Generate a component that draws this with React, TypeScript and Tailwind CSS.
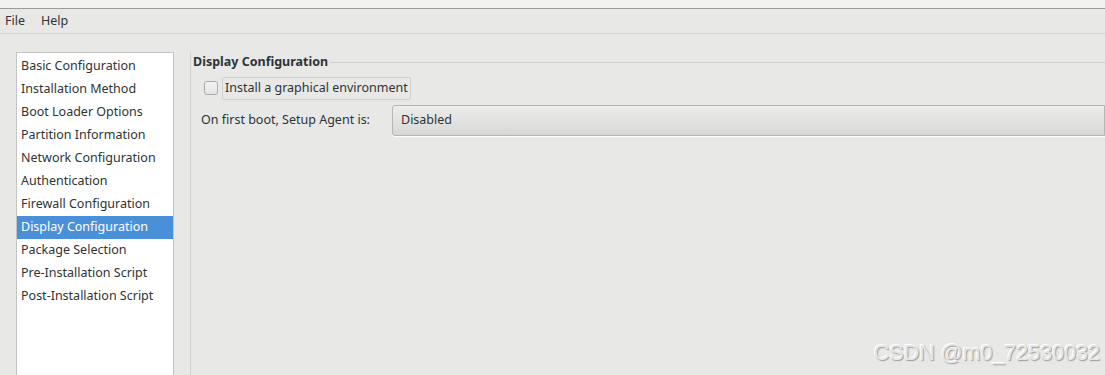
import React from "react";

const SECTIONS = [
  "Basic Configuration",
  "Installation Method",
  "Boot Loader Options",
  "Partition Information",
  "Network Configuration",
  "Authentication",
  "Firewall Configuration",
  "Display Configuration",
  "Package Selection",
  "Pre-Installation Script",
  "Post-Installation Script",
];

const ACTIVE = "Display Configuration";

export default function App() {
  return (
    <div className="relative h-[375px] w-[1105px] overflow-hidden bg-[#e8e8e7] font-['Noto_Sans',sans-serif] text-[12.5px] text-[#2e3436]">
      {/* 창 제목줄 잔여 */}
      <div className="h-[9px] border-b border-[#9b9b97] bg-[#f2f2f1]" />

      {/* 메뉴바 */}
      <div className="flex h-[25px] items-center gap-[16px] border-b border-[#d6d6d4] px-[5px]">
        <span>File</span>
        <span>Help</span>
      </div>

      <div className="flex pt-[18px]">
        {/* 섹션 목록 */}
        <div className="ml-[16px] h-[330px] w-[158px] border border-[#c4c4c2] bg-white pt-[2px]">
          {SECTIONS.map((s) => (
            <div
              key={s}
              className={`flex h-[23px] items-center px-[4px] ${
                s === ACTIVE ? "bg-[#4a90d9] text-white" : ""
              }`}
            >
              {s}
            </div>
          ))}
        </div>

        {/* 페인 구분선 */}
        <div className="ml-[16px] w-px self-stretch bg-[#d2d2d0]" />

        {/* 설정 프레임 */}
        <div className="flex-1 pt-px">
          <div className="flex items-center">
            <span className="-ml-px pl-[3px] font-bold">Display Configuration</span>
            <div className="ml-[2px] h-px flex-1 bg-[#cfcfcd]" />
          </div>
          <div className="flex flex-col pl-[13px] pt-[5px]">
            <div className="flex items-center gap-[4px]">
              <div className="h-[14px] w-[14px] rounded-[3px] border border-[#a9a9a7] bg-gradient-to-b from-[#f4f4f4] to-[#e4e4e4]" />
              <span className="rounded-[2px] border border-[#d0d0ce] px-[2px] py-[1px]">
                Install a graphical environment
              </span>
            </div>
            <div className="mt-[5px] flex items-center">
              <span className="-ml-[3px] w-[191px]">On first boot, Setup Agent is:</span>
              <div className="flex h-[31px] flex-1 items-center rounded-l-[3px] border border-[#b6b6b3] bg-gradient-to-b from-[#ededec] to-[#d8d8d7] pl-[8px] shadow-[0_1px_0_#ffffff]">
                Disabled
              </div>
            </div>
          </div>
        </div>
      </div>

      {/* 워터마크 */}
      <div className="absolute bottom-[6px] right-[5px] font-['Liberation_Sans',sans-serif] text-[21.5px] text-[#e6e6e6] [text-shadow:1px_1px_1px_#9c9c9c,-1px_-1px_0_#ffffff]">
        CSDN @m0_72530032
      </div>
    </div>
  );
}
